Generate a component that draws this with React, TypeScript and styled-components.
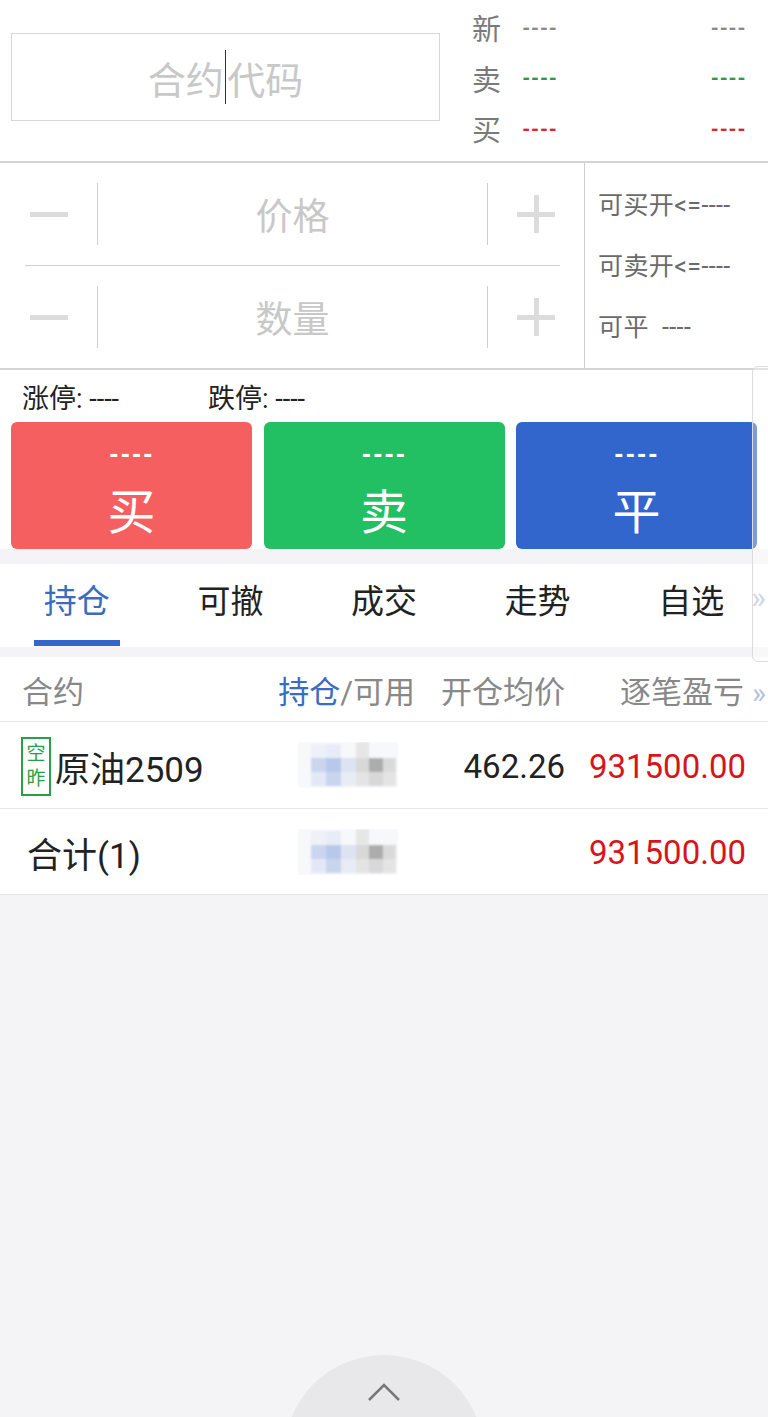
import { type FC } from "react";
import styled, { createGlobalStyle } from "styled-components";

const GlobalStyle = createGlobalStyle`
  html, body {
    margin: 0;
    padding: 0;
    background: #f4f4f6;
  }
  body {
    font-family: Roboto, "Noto Sans CJK SC", "Noto Sans", sans-serif;
  }
`;

const Page = styled.div`
  position: relative;
  width: 768px;
  height: 1417px;
  overflow: hidden;
  background: #f4f4f6;
`;

/* ---------- quote header ---------- */

const QuoteBar = styled.div`
  display: flex;
  height: 161px;
  background: #fff;
  border-bottom: 2px solid #d4d4d4;
`;

const CodeBox = styled.div`
  box-sizing: border-box;
  width: 429px;
  height: 88px;
  margin: 33px 0 0 11px;
  border: 1.5px solid #d6d6d6;
  display: flex;
  align-items: center;
  justify-content: center;
  font-size: 38px;
  color: #c8c8c8;
`;

const Caret = styled.span`
  display: inline-block;
  width: 1.5px;
  height: 54px;
  background: #333;
  margin: 0 1px;
`;

const QuoteList = styled.div`
  flex: 1;
  display: flex;
  flex-direction: column;
  padding: 2px 22px 0 32px;
`;

const QuoteRow = styled.div`
  display: flex;
  align-items: center;
  height: 50.5px;
`;

const QuoteLabel = styled.span`
  font-size: 29px;
  color: #7a7a7a;
  width: 50px;
`;

const Dash = styled.span<{ $c: string }>`
  font-size: 19px;
  font-weight: 900;
  letter-spacing: 0.3px;
  color: ${(p) => p.$c};
  line-height: 1;
  margin-top: 2px;
`;

const Spacer = styled.div`
  flex: 1;
`;

/* ---------- price / qty ---------- */

const EntryPanel = styled.div`
  display: flex;
  height: 205px;
  background: #fff;
  border-bottom: 2px solid #d4d4d4;
`;

const Steppers = styled.div`
  width: 585px;
  box-sizing: border-box;
  padding: 0 24px 0 25px;
  border-right: 1.5px solid #d0d0d0;
  display: flex;
  flex-direction: column;
`;

const StepRow = styled.div<{ $divider?: boolean }>`
  display: flex;
  align-items: center;
  height: 102px;
  border-bottom: ${(p) => (p.$divider ? "1.5px solid #cfcfcf" : "none")};
`;

const StepBtn = styled.div<{ $end?: boolean }>`
  width: 72px;
  height: 62px;
  box-sizing: border-box;
  display: flex;
  align-items: center;
  justify-content: ${(p) => (p.$end ? "flex-end" : "flex-start")};
  padding: 0 5px;
`;

const Bar = styled.span<{ $vertical?: boolean }>`
  position: relative;
  display: block;
  width: 38px;
  height: 38px;
  &::before,
  &::after {
    content: "";
    position: absolute;
    background: #dcdcdc;
  }
  &::before {
    left: 0;
    right: 0;
    top: 17px;
    height: 5px;
  }
  &::after {
    display: ${(p) => (p.$vertical ? "block" : "none")};
    top: 0;
    bottom: 0;
    left: 17px;
    width: 5px;
  }
`;

const StepField = styled.div`
  flex: 1;
  height: 62px;
  border-left: 1.5px solid #cfcfcf;
  border-right: 1.5px solid #cfcfcf;
  display: flex;
  align-items: center;
  justify-content: center;
  font-size: 37px;
  color: #c8c8c8;
`;

const Limits = styled.div`
  flex: 1;
  display: flex;
  flex-direction: column;
  padding: 30px 0 0 13px;
  gap: 35px;
`;

const LimitLine = styled.div`
  font-size: 25px;
  line-height: 26px;
  color: #6a6a6a;
  white-space: pre;
  letter-spacing: 0.4px;
`;

/* ---------- order buttons ---------- */

const OrderPanel = styled.div`
  background: #fff;
  padding: 0 11px 0 11px;
  margin-bottom: 15px;
`;

const LimitBar = styled.div`
  display: flex;
  height: 52px;
  align-items: center;
  font-size: 27px;
  color: #222;
  padding-left: 11px;
`;

const LimitItem = styled.span`
  width: 186px;
`;

const OrderGrid = styled.div`
  display: grid;
  grid-template-columns: 241px 241px 241px;
  column-gap: 11.5px;
`;

const OrderBtn = styled.div<{ $bg: string }>`
  height: 127px;
  border-radius: 6px;
  background: ${(p) => p.$bg};
  color: #fff;
  display: flex;
  flex-direction: column;
  align-items: center;
`;

const OrderPrice = styled.div`
  font-size: 23px;
  font-weight: 900;
  letter-spacing: 1px;
  margin-top: 22px;
  line-height: 1;
`;

const OrderLabel = styled.div`
  font-size: 48px;
  line-height: 1;
  margin-top: 22px;
`;

/* ---------- tabs ---------- */

const Tabs = styled.div`
  position: relative;
  display: grid;
  grid-template-columns: repeat(5, 1fr);
  height: 83px;
  background: #fff;
  margin-bottom: 10px;
`;

const Tab = styled.div<{ $active?: boolean }>`
  position: relative;
  display: flex;
  justify-content: center;
  padding-top: 11px;
  font-size: 33px;
  color: ${(p) => (p.$active ? "#3a6cc0" : "#222")};
  &::after {
    content: "";
    display: ${(p) => (p.$active ? "block" : "none")};
    position: absolute;
    left: 34px;
    width: 86px;
    bottom: 1px;
    height: 6px;
    background: #3366cc;
  }
`;

const TabMore = styled.span`
  position: absolute;
  right: 2px;
  top: 14px;
  font-size: 32px;
  color: #b4c2de;
`;

/* ---------- positions table ---------- */

const Table = styled.div`
  background: #fff;
  margin-top: 1px;
`;

const Row = styled.div<{ $h: number }>`
  display: grid;
  grid-template-columns: 255px 138px 150px 181px;
  align-items: center;
  height: ${(p) => p.$h}px;
  padding: 0 22px;
  border-bottom: 1.5px solid #e8e8e8;
`;

const HeadCell = styled.div<{ $right?: boolean; $bleed?: boolean }>`
  font-size: 31px;
  color: #888;
  text-align: ${(p) => (p.$right ? "right" : "left")};
  white-space: nowrap;
  margin-right: ${(p) => (p.$bleed ? "-20px" : "0")};
`;

const HeadMore = styled.span`
  font-size: 30px;
  color: #b4c2de;
  margin-left: 8px;
`;

const Blue = styled.span`
  color: #3a6cc0;
`;

const Cell = styled.div<{ $right?: boolean; $red?: boolean; $indent?: number }>`
  font-size: 33px;
  color: ${(p) => (p.$red ? "#d7141c" : "#222")};
  white-space: nowrap;
  display: flex;
  align-items: center;
  justify-content: ${(p) => (p.$right ? "flex-end" : "flex-start")};
  padding-left: ${(p) => p.$indent ?? 0}px;
  padding-top: 2px;
`;

const Name = styled.span`
  font-size: 35px;
`;

const Tag = styled.span`
  box-sizing: border-box;
  width: 30px;
  height: 59px;
  border: 2px solid #2aa046;
  color: #2aa046;
  font-size: 19px;
  line-height: 25px;
  display: flex;
  flex-direction: column;
  align-items: center;
  justify-content: center;
  margin-right: 4px;
  margin-left: -1px;
`;

const Masked = styled.div`
  display: flex;
  justify-content: center;
  padding-left: 4px;
`;

const Handle = styled.div`
  position: absolute;
  left: 752px;
  top: 366px;
  width: 30px;
  height: 296px;
  border: 1px solid #dcdcdc;
  border-radius: 6px;
  background: rgba(255, 255, 255, 0.35);
  box-sizing: border-box;
`;

const Drawer = styled.div`
  position: absolute;
  left: 284px;
  top: 1355px;
  width: 200px;
  height: 200px;
  border-radius: 50%;
  background: #e8e8ea;
  display: flex;
  justify-content: center;
  padding-top: 27px;
  box-sizing: border-box;
`;

const Pixels: FC = () => (
  <svg width="100" height="46" viewBox="0 0 100 46">
    <defs>
      <filter id="soft">
        <feGaussianBlur stdDeviation="0.8" />
      </filter>
    </defs>
    <g filter="url(#soft)">
      <rect x="0" y="0" width="100" height="46" fill="#f7f8fb" />
      <rect x="13" y="2" width="15" height="14" fill="#eef1f8" />
      <rect x="28" y="2" width="15" height="14" fill="#e8ecf6" />
      <rect x="58" y="0" width="13" height="16" fill="#e6e6e6" />
      <rect x="13" y="16" width="15" height="14" fill="#cbd6ee" />
      <rect x="28" y="16" width="15" height="14" fill="#b8c8ea" />
      <rect x="43" y="16" width="15" height="14" fill="#dde3f1" />
      <rect x="58" y="16" width="13" height="14" fill="#d8d8d8" />
      <rect x="71" y="16" width="14" height="14" fill="#acacac" />
      <rect x="85" y="16" width="13" height="14" fill="#dadada" />
      <rect x="13" y="30" width="15" height="14" fill="#e2e8f5" />
      <rect x="28" y="30" width="15" height="14" fill="#c9d5ee" />
      <rect x="43" y="30" width="15" height="14" fill="#e8ecf5" />
      <rect x="58" y="30" width="13" height="14" fill="#e4e4e4" />
      <rect x="71" y="30" width="14" height="14" fill="#d8d8d8" />
      <rect x="85" y="30" width="13" height="14" fill="#e4e4e4" />
    </g>
  </svg>
);

const App: FC = () => {
  const quotes = [
    { label: "新", color: "#8a8a8a" },
    { label: "卖", color: "#2e9a46" },
    { label: "买", color: "#d42a2a" },
  ];

  return (
    <Page>
      <GlobalStyle />
      <QuoteBar>
        <CodeBox>
          合约
          <Caret />
          代码
        </CodeBox>
        <QuoteList>
          {quotes.map((q) => (
            <QuoteRow key={q.label}>
              <QuoteLabel>{q.label}</QuoteLabel>
              <Dash $c={q.color}>----</Dash>
              <Spacer />
              <Dash $c={q.color}>----</Dash>
            </QuoteRow>
          ))}
        </QuoteList>
      </QuoteBar>

      <EntryPanel>
        <Steppers>
          <StepRow $divider>
            <StepBtn>
              <Bar />
            </StepBtn>
            <StepField>价格</StepField>
            <StepBtn $end>
              <Bar $vertical />
            </StepBtn>
          </StepRow>
          <StepRow>
            <StepBtn>
              <Bar />
            </StepBtn>
            <StepField>数量</StepField>
            <StepBtn $end>
              <Bar $vertical />
            </StepBtn>
          </StepRow>
        </Steppers>
        <Limits>
          <LimitLine>可买开&lt;=----</LimitLine>
          <LimitLine>可卖开&lt;=----</LimitLine>
          <LimitLine>可平  ----</LimitLine>
        </Limits>
      </EntryPanel>

      <OrderPanel>
        <LimitBar>
          <LimitItem>涨停: ----</LimitItem>
          <LimitItem>跌停: ----</LimitItem>
        </LimitBar>
        <OrderGrid>
          <OrderBtn $bg="#f65f5f">
            <OrderPrice>----</OrderPrice>
            <OrderLabel>买</OrderLabel>
          </OrderBtn>
          <OrderBtn $bg="#22bf63">
            <OrderPrice>----</OrderPrice>
            <OrderLabel>卖</OrderLabel>
          </OrderBtn>
          <OrderBtn $bg="#3366cc">
            <OrderPrice>----</OrderPrice>
            <OrderLabel>平</OrderLabel>
          </OrderBtn>
        </OrderGrid>
      </OrderPanel>

      <Tabs>
        <Tab $active>持仓</Tab>
        <Tab>可撤</Tab>
        <Tab>成交</Tab>
        <Tab>走势</Tab>
        <Tab>自选</Tab>
        <TabMore>»</TabMore>
      </Tabs>

      <Table>
        <Row $h={64}>
          <HeadCell>合约</HeadCell>
          <HeadCell $right>
            <Blue>持仓</Blue>/可用
          </HeadCell>
          <HeadCell $right>开仓均价</HeadCell>
          <HeadCell $right $bleed>
            逐笔盈亏
            <HeadMore>»</HeadMore>
          </HeadCell>
        </Row>
        <Row $h={86}>
          <Cell>
            <Tag>
              <span>空</span>
              <span>昨</span>
            </Tag>
            <Name>原油2509</Name>
          </Cell>
          <Masked>
            <Pixels />
          </Masked>
          <Cell $right>462.26</Cell>
          <Cell $right $red>
            931500.00
          </Cell>
        </Row>
        <Row $h={85}>
          <Cell $indent={5}>
            <Name>合计(1)</Name>
          </Cell>
          <Masked>
            <Pixels />
          </Masked>
          <Cell $right />
          <Cell $right $red>
            931500.00
          </Cell>
        </Row>
      </Table>

      <Handle />
      <Drawer>
        <svg width="34" height="20" viewBox="0 0 34 20">
          <path d="M2 18 L17 3 L32 18" fill="none" stroke="#777" strokeWidth="2.5" />
        </svg>
      </Drawer>
    </Page>
  );
};

export default App;
